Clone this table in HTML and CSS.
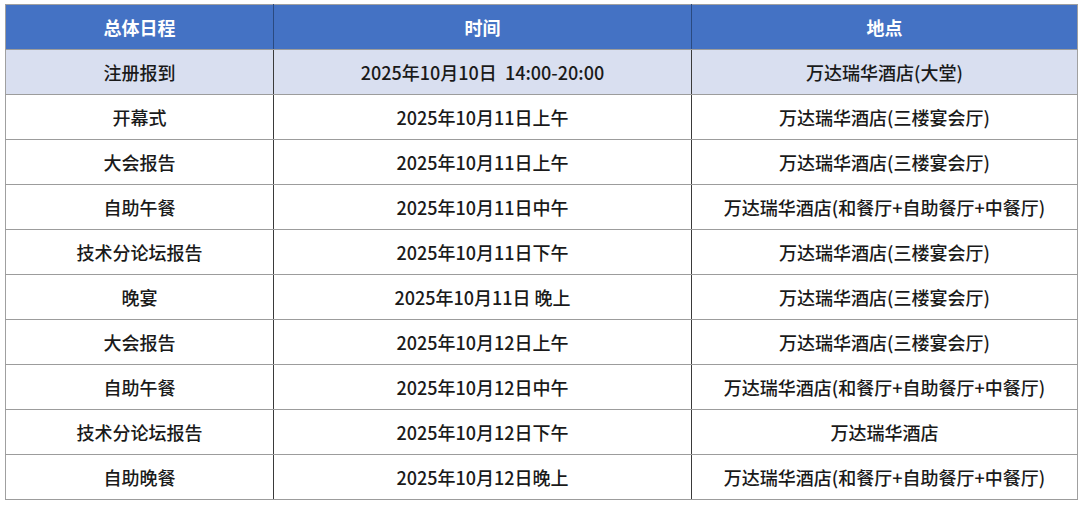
FILE: index.html
```html
<!DOCTYPE html>
<html lang="zh">
<head>
<meta charset="utf-8">
<link rel="stylesheet" href="styles.css">
</head>
<body>
<table class="sched">
  <colgroup>
    <col class="c1"><col class="c2"><col class="c3">
  </colgroup>
  <thead>
    <tr><th>总体日程</th><th>时间</th><th>地点</th></tr>
  </thead>
  <tbody>
    <tr class="hl"><td>注册报到</td><td>2025年10月10日&nbsp;&nbsp;14:00-20:00</td><td>万达瑞华酒店(大堂)</td></tr>
    <tr><td>开幕式</td><td>2025年10月11日上午</td><td>万达瑞华酒店(三楼宴会厅)</td></tr>
    <tr><td>大会报告</td><td>2025年10月11日上午</td><td>万达瑞华酒店(三楼宴会厅)</td></tr>
    <tr><td>自助午餐</td><td>2025年10月11日中午</td><td>万达瑞华酒店(和餐厅+自助餐厅+中餐厅)</td></tr>
    <tr><td>技术分论坛报告</td><td>2025年10月11日下午</td><td>万达瑞华酒店(三楼宴会厅)</td></tr>
    <tr><td>晚宴</td><td>2025年10月11日 晚上</td><td>万达瑞华酒店(三楼宴会厅)</td></tr>
    <tr><td>大会报告</td><td>2025年10月12日上午</td><td>万达瑞华酒店(三楼宴会厅)</td></tr>
    <tr><td>自助午餐</td><td>2025年10月12日中午</td><td>万达瑞华酒店(和餐厅+自助餐厅+中餐厅)</td></tr>
    <tr><td>技术分论坛报告</td><td>2025年10月12日下午</td><td>万达瑞华酒店</td></tr>
    <tr><td>自助晚餐</td><td>2025年10月12日晚上</td><td>万达瑞华酒店(和餐厅+自助餐厅+中餐厅)</td></tr>
  </tbody>
</table>
</body>
</html>
```
FILE: styles.css
```css
html, body {
  margin: 0;
  padding: 0;
  background: #ffffff;
}
body {
  padding: 4px 0 0 5px;
  font-family: "Noto Sans CJK SC", "Noto Sans", sans-serif;
}
.sched {
  border-collapse: collapse;
  table-layout: fixed;
  width: 1072px;
  border: 1px solid #a0a0a0;
}
.c1 { width: 268px; }
.c2 { width: 418px; }
.c3 { width: 386px; }
.sched th, .sched td {
  height: 44px;
  padding: 0;
  text-align: center;
  vertical-align: middle;
  font-size: 18px;
  line-height: 20px;
  border-top: 1px solid #9c9c9c;
  border-bottom: 1px solid #9c9c9c;
  border-left: 1px solid #3a3a3a;
  border-right: 1px solid #3a3a3a;
}
.sched th:first-child, .sched td:first-child { border-left-color: #a0a0a0; }
.sched th:last-child, .sched td:last-child { border-right-color: #a0a0a0; }
.sched th {
  background: #4472c4;
  color: #ffffff;
  font-weight: 700;
  border-top-color: #a0a0a0;
  border-left-color: #2a4a80;
  border-right-color: #2a4a80;
}
.sched td {
  color: #1a1a1a;
  font-weight: 500;
}
.sched tr.hl td {
  background: #d9dff0;
}
```
